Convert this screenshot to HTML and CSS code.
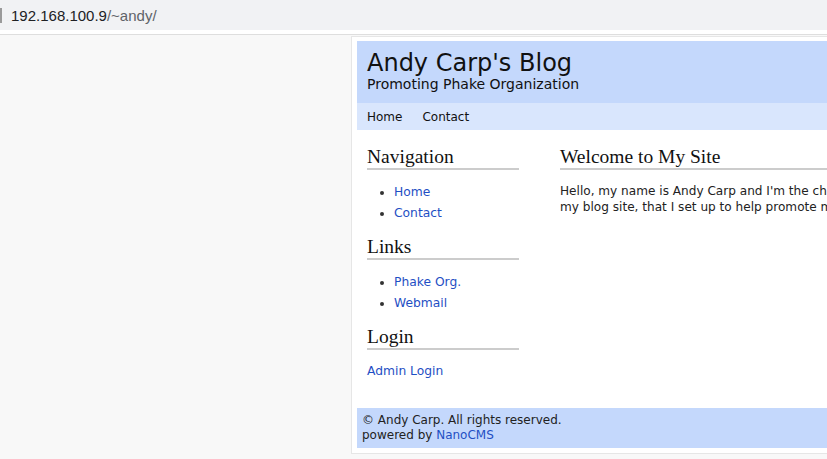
FILE: index.html
```html
<!DOCTYPE html>
<html>
<head>
<meta charset="utf-8">
<link rel="stylesheet" href="styles.css">
</head>
<body>
<div class="chrome">
  <span class="caret"></span>
  <span class="url"><span class="host">192.168.100.9</span><span class="path">/~andy/</span></span>
</div>
<div class="viewport">
  <div class="panel">
    <header class="header">
      <h1 class="title">Andy Carp's Blog</h1>
      <div class="subtitle">Promoting Phake Organization</div>
    </header>
    <nav class="topnav">
      <a href="#">Home</a>
      <a href="#">Contact</a>
    </nav>
    <div class="content">
      <aside class="sidebar">
        <h2 class="boxtitle">Navigation</h2>
        <ul class="links">
          <li><a href="#">Home</a></li>
          <li><a href="#">Contact</a></li>
        </ul>
        <h2 class="boxtitle">Links</h2>
        <ul class="links">
          <li><a href="#">Phake Org.</a></li>
          <li><a href="#">Webmail</a></li>
        </ul>
        <h2 class="boxtitle">Login</h2>
        <p class="login"><a href="#">Admin Login</a></p>
      </aside>
      <main class="main">
        <h2 class="boxtitle">Welcome to My Site</h2>
        <p class="text">Hello, my name is Andy Carp and I'm the chief marketing officer of Phake Organization. Welcome to<br>my blog site, that I set up to help promote my company and share what we are working on.</p>
      </main>
    </div>
    <footer class="footer">
      <div>&copy; Andy Carp. All rights reserved.</div>
      <div>powered by <a href="#">NanoCMS</a></div>
    </footer>
  </div>
</div>
</body>
</html>
```
FILE: styles.css
```css
html, body {
  margin: 0;
  padding: 0;
  overflow: hidden;
  width: 827px;
  height: 459px;
  background: #f8f8f8;
}
body {
  font-family: "DejaVu Sans", Verdana, sans-serif;
}
.chrome {
  height: 30px;
  background: #f1f2f4;
  display: flex;
  align-items: center;
  border-bottom: 4px solid #ffffff;
  box-shadow: 0 1px 0 #dedede;
  position: relative;
}
.caret {
  width: 2px;
  height: 15px;
  background: #9a9a9a;
  margin-right: 9px;
}
.url {
  font-family: "Liberation Sans", Arial, sans-serif;
  font-size: 15px;
  white-space: nowrap;
}
.host { color: #202124; }
.path { color: #5f6368; }
.viewport {
  padding: 2px 0 0 351px;
}
.panel {
  width: 900px;
  background: #ffffff;
  border: 1px solid #e6e6e6;
  padding: 4px 0 5px 5px;
}
.header {
  background: #c4d8fc;
  height: 62px;
  padding: 10px 0 0 10px;
  box-sizing: border-box;
}
.title {
  margin: 0;
  font-weight: normal;
  font-size: 24px;
  line-height: 25px;
  color: #111;
}
.subtitle {
  font-size: 14px;
  line-height: 16px;
  color: #111;
}
.topnav {
  background: #d9e6fd;
  height: 27px;
  display: flex;
  align-items: center;
  gap: 20px;
  padding-left: 10px;
}
.topnav a {
  color: #111;
  text-decoration: none;
  font-size: 12px;
}
.content {
  display: flex;
  padding: 17px 0 0 10px;
  height: 278px;
  box-sizing: border-box;
}
.sidebar {
  width: 152px;
  flex: none;
}
.main {
  margin-left: 41px;
  flex: 1;
}
.boxtitle {
  font-family: "Liberation Serif", Georgia, serif;
  font-weight: normal;
  font-size: 19.5px;
  line-height: 20px;
  color: #111;
  margin: 0;
  padding-bottom: 1px;
  border-bottom: 2px solid #cccccc;
}
.links {
  margin: 12px 0 13px 0;
  padding-left: 27px;
  font-size: 12.3px;
  line-height: 21px;
}
.links li { color: #333; }
a { color: #1f4fc4; text-decoration: none; }
.login {
  margin: 14px 0 0 0;
  font-size: 12.3px;
}
.text {
  margin: 13px 0 0 0;
  font-size: 12.1px;
  line-height: 16px;
  color: #222;
  white-space: nowrap;
}
.footer {
  background: #c4d8fc;
  height: 40px;
  box-sizing: border-box;
  padding: 5px 5px;
  font-size: 12px;
  line-height: 15px;
  color: #222;
}
```
